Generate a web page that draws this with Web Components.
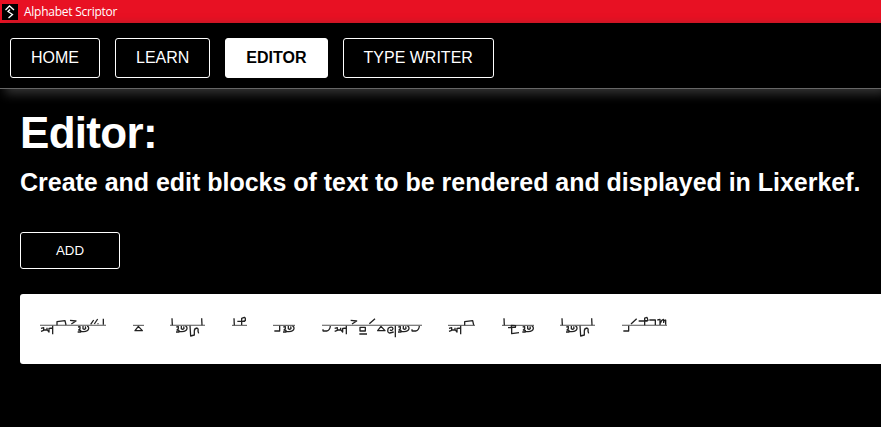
<!DOCTYPE html>
<html lang="en">
<head>
<meta charset="utf-8">
<title>Alphabet Scriptor</title>
<style>
html,body{margin:0;height:100%;background:#000;overflow:hidden}
body{font-family:"Liberation Sans",Arial,sans-serif;color:#fff}
</style>
</head>
<body>
<scriptor-app></scriptor-app>
<script>
const define = (name, html, init) => customElements.define(name, class extends HTMLElement {
  constructor() {
    super();
    this.attachShadow({mode: 'open'}).innerHTML = html;
    if (init) init(this);
  }
});

define('title-bar', `<style>
:host{display:flex;align-items:center;height:23px;background:#e81123;padding-left:2px;gap:6px;box-sizing:border-box;font:12px/22px "Open Sans","Noto Sans",sans-serif;letter-spacing:-.25px}
svg{display:block}
</style><svg width="16" height="16" viewBox="0 0 16 16"><path fill="#000" d="M0 0h16v16H0z"/><path d="M3.500 6L7.500 2l4.500 4M8 5.500l-2 2 4.500 3L6.500 14" fill="none" stroke="#fff" stroke-width="1.3"/></svg><span><slot></slot></span>`);

define('nav-button', `<style>
:host{display:block;box-sizing:border-box;height:40px;border:1px solid #fff;border-radius:3px;padding:0 20px;font-size:16px;line-height:38px;white-space:nowrap}
:host([active]){background:#fff;color:#000;font-weight:bold}
:host([small]){width:100px;height:37px;padding:0;text-align:center;font-size:13.333px;line-height:35px}
</style><slot></slot>`);

define('nav-bar', `<style>
:host{display:flex;gap:15px;padding:15px 10px 10px;height:40px;border-bottom:1px solid #666;box-shadow:5px 5px 10px #333;background:#000}
</style><slot></slot>`);

/* Letter strokes, in thirds of a pixel; y = 0 is the headline of the word. */
const letters = {
  xn: 'M2 9L10 7v8l-8 3M10 14h10V7M20 13l6 7V9l11-1M37 1v26',
  box: 'M0 0V-11L24-14 27-1',
  chev: 'M0-15L18-13 4-4',
  mg: 'M2 5l6-1v6l-4 4 6 1v5H1M10 18q22 3 24-8q0-8-5-7M17 2v8q5 4 8-1l-1-6',
  tri: 'M0 16L10 3 22 16Z',
  tick: 'M0-21L1 0',
  j: 'M1 17h16V1',
  u: 'M0 17h12q10-2 11-15M1 12v5',
  sr: 'M0 1l2 31 11-3V17q0-8 8-9q5 2 3 9l2 7'
};
const words = [
  [66, [['xn',1],['box',51],['chev',90],['mg',112],['M152-3l9-13M163-4l10-15M174-6v3M190-20V-2']]],
  [11, [['tri',6]]],
  [35, [['tick',6],['mg',17],['tick',95],['sr',60]]],
  [15, [['tick',6],['M16-12H39M29-1V-21l8-3 3 3v7l-8 2']]],
  [22, [['j',3],['mg',29]]],
  [100,[['u',2],['xn',36],['chev',86],['M114 6h16v11h-16ZM112 26h23M142-5l17-15'],['tri',167],['M199 8q12-6 14 2q-3 9-9 3M199 8q-5 14 4 15l12-3M220 1v35'],['mg',227],['u',269]]],
  [27, [['xn',1],['box',50]]],
  [32, [['tick',6],['M18 7h10V0l13 1-1 5H29v19l22-3']  ,['mg',60]]],
  [35, [['tick',6],['mg',17],['tick',95],['sr',60]]],
  [45, [['j',3],['M27-4l17-16M50-13h27M68 0V-22l7-2 3 9-10 2M82-16h18V-1M106-16l8-2v17M115-6q3-11 10-12v11M125-12l6-4v14']]]
];
define('script-word', `<style>
:host{display:block;height:40px}
svg{display:block;overflow:visible}
path{fill:none;stroke:#222;stroke-width:3.9;stroke-linejoin:round}
.line{stroke:#555;stroke-width:3.1}
</style>`, el => {
  const [w, parts] = words[el.getAttribute('index')];
  el.shadowRoot.innerHTML += `<svg width="${w}" height="40" viewBox="0 -61 ${w*3} 120"><path class="line" d="M0 0H${w*3}"/>` +
    parts.map(([d, x]) => x === undefined ? `<path d="${d}"/>` : `<path transform="translate(${x})" d="${letters[d]}"/>`).join('') + '</svg>';
});

define('text-block', `<style>
:host{display:flex;align-items:flex-start;gap:26.5px;height:70px;box-sizing:border-box;background:#fff;border-radius:3px 0 0 3px;padding:11px 20px}
</style>` + words.map((w, i) => `<script-word index="${i}"></script-word>`).join(''));

define('editor-page', `<style>
:host{display:block;padding:19px 0 0 20px}
h1{margin:0;font-size:44px;line-height:50px;letter-spacing:-.7px}
h2{margin:7px 0 0;font-size:25px;line-height:34px;white-space:nowrap;letter-spacing:-.02px}
nav-button{margin:33px 0 25px}
</style><h1>Editor:</h1><h2>Create and edit blocks of text to be rendered and displayed in Lixerkef.</h2><nav-button small>ADD</nav-button><text-block></text-block>`);

define('scriptor-app', `<style>:host{display:block}</style>
<title-bar>Alphabet Scriptor</title-bar>
<nav-bar><nav-button>HOME</nav-button><nav-button>LEARN</nav-button><nav-button active>EDITOR</nav-button><nav-button>TYPE WRITER</nav-button></nav-bar>
<editor-page></editor-page>`);
</script>
</body>
</html>
